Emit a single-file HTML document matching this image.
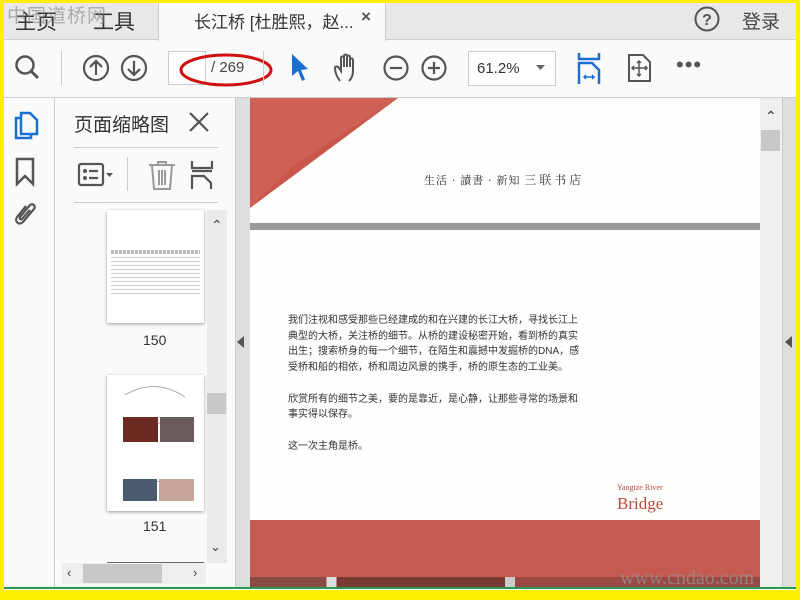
<!DOCTYPE html>
<html><head><meta charset="utf-8"><style>
*{margin:0;padding:0;box-sizing:border-box}
body{width:800px;height:600px;overflow:hidden;background:#ffef00;position:relative;font-family:"Liberation Sans","Noto Sans CJK SC",sans-serif}
.a{position:absolute}
svg{position:absolute;overflow:visible}
</style></head><body>
<div class="a" style="left:4px;top:3px;width:792px;height:587px;background:#fafafa"></div>
<!-- tab bar -->
<div class="a" style="left:4px;top:3px;width:792px;height:37px;background:#e8e8e8;border-bottom:1px solid #ccc"></div>
<div class="a" style="left:158px;top:3px;width:228px;height:38px;background:#fafafa;border-left:1px solid #ccc;border-right:1px solid #ccc"></div>
<div class="a" style="left:15px;top:6px;font-size:21px;color:#333">主页</div>
<div class="a" style="left:93px;top:6px;font-size:21px;color:#333">工具</div>
<div class="a" style="left:7px;top:1px;font-size:19px;color:rgba(120,120,120,.55);letter-spacing:1px">中国道桥网</div>
<div class="a" style="left:194px;top:8px;font-size:17px;color:#333">长江桥 [杜胜熙，赵...</div>
<div class="a" style="left:361px;top:7px;font-size:17px;color:#555;font-weight:bold">×</div>
<svg style="left:694px;top:6px" width="26" height="26"><circle cx="13" cy="13" r="11.5" fill="none" stroke="#555" stroke-width="2"/><text x="13" y="19" font-size="16" text-anchor="middle" fill="#555" font-family="Liberation Sans" font-weight="bold">?</text></svg>
<div class="a" style="left:742px;top:7px;font-size:19px;color:#444">登录</div>
<!-- toolbar -->
<div class="a" style="left:4px;top:97px;width:792px;height:1px;background:#ccc"></div>
<svg style="left:14px;top:54px" width="28" height="28"><circle cx="11" cy="11" r="8.5" fill="none" stroke="#555" stroke-width="2.5"/><line x1="17" y1="17" x2="24" y2="24" stroke="#555" stroke-width="3"/></svg>
<div class="a" style="left:61px;top:51px;width:1px;height:34px;background:#ccc"></div>
<svg style="left:82px;top:54px" width="28" height="28"><circle cx="14" cy="14" r="12" fill="none" stroke="#555" stroke-width="2.2"/><path d="M14 21V7M8 13l6-6 6 6" fill="none" stroke="#555" stroke-width="2.2"/></svg>
<svg style="left:120px;top:54px" width="28" height="28"><circle cx="14" cy="14" r="12" fill="none" stroke="#555" stroke-width="2.2"/><path d="M14 7v14M8 15l6 6 6-6" fill="none" stroke="#555" stroke-width="2.2"/></svg>
<div class="a" style="left:168px;top:51px;width:38px;height:34px;border:1px solid #ccc;background:#fff"></div>
<div class="a" style="left:211px;top:59px;font-size:15px;color:#444">/ 269</div>
<svg style="left:178px;top:50px" width="96" height="40"><ellipse cx="48" cy="20" rx="45" ry="15" fill="none" stroke="#d01010" stroke-width="3"/></svg>
<div class="a" style="left:263px;top:51px;width:1px;height:34px;background:#ccc"></div>
<svg style="left:290px;top:53px" width="20" height="30"><path d="M2 1L2 23L8 18L12 28L15 26.5L11 17L18 16Z" fill="#1a6fd0"/></svg>
<svg style="left:332px;top:53px" width="30" height="30"><path d="M8 28C5 24 3 19 3 15c0-2 3-2 4 0l2 3V5c0-2 3-2 3 0v9V3c0-2 3-2 3 0v11V4c0-2 3-2 3 0v10V7c0-2 3-2 3 0v11c0 5-2 8-4 10" fill="none" stroke="#555" stroke-width="2"/></svg>
<svg style="left:383px;top:55px" width="26" height="26"><circle cx="13" cy="13" r="11.5" fill="none" stroke="#555" stroke-width="2.2"/><line x1="7" y1="13" x2="19" y2="13" stroke="#555" stroke-width="2.2"/></svg>
<svg style="left:421px;top:55px" width="26" height="26"><circle cx="13" cy="13" r="11.5" fill="none" stroke="#555" stroke-width="2.2"/><path d="M7 13h12M13 7v12" stroke="#555" stroke-width="2.2"/></svg>
<div class="a" style="left:468px;top:51px;width:88px;height:35px;border:1px solid #ccc;background:#fff"></div>
<div class="a" style="left:477px;top:60px;font-size:15px;color:#333">61.2%</div>
<svg style="left:536px;top:65px" width="10" height="6"><path d="M0 0h9L4.5 5z" fill="#666"/></svg>
<svg style="left:578px;top:52px" width="24" height="32"><path d="M1 1v6h20V1" fill="none" stroke="#1a6fd0" stroke-width="2.5"/><path d="M1 32V11h13l7 7v14" fill="none" stroke="#1a6fd0" stroke-width="2.5"/><path d="M6 25h10M8 23l-2 2 2 2M14 23l2 2-2 2" fill="none" stroke="#1a6fd0" stroke-width="1.5"/></svg>
<svg style="left:628px;top:54px" width="24" height="28"><path d="M1 1h14l7 7v19H1z" fill="none" stroke="#555" stroke-width="2"/><path d="M11 7v15M4 14h15M9 9l2-2 2 2M9 20l2 2 2-2M6 12l-2 2 2 2M17 12l2 2-2 2" fill="none" stroke="#555" stroke-width="1.5"/></svg>
<div class="a" style="left:676px;top:52px;font-size:22px;color:#555;letter-spacing:1px">•••</div>
<!-- left icon column -->
<div class="a" style="left:54px;top:98px;width:1px;height:490px;background:#ccc"></div>
<svg style="left:15px;top:112px" width="24" height="28"><path d="M6 1h9l7 7v14H6z" fill="none" stroke="#1a6fd0" stroke-width="2.5"/><path d="M6 6H1v20h15v-4" fill="none" stroke="#1a6fd0" stroke-width="2.5"/></svg>
<svg style="left:15px;top:157px" width="20" height="30"><path d="M2 2h16v25l-8-8-8 8z" fill="none" stroke="#555" stroke-width="2.5"/></svg>
<svg style="left:12px;top:200px" width="26" height="30"><path d="M14 6L5 17c-3 4 2 9 6 5l11-13c2-3-1-6-4-4L8 17c-1 2 1 3 2 2l8-9" fill="none" stroke="#555" stroke-width="2.2"/></svg>
<!-- thumbnail panel -->
<div class="a" style="left:74px;top:110px;font-size:19px;color:#333">页面缩略图</div>
<svg style="left:189px;top:112px" width="20" height="20"><path d="M1 1l18 18M19 1L1 19" stroke="#555" stroke-width="2.2"/></svg>
<div class="a" style="left:74px;top:147px;width:144px;height:1px;background:#ccc"></div>
<svg style="left:78px;top:163px" width="36" height="24"><rect x="1" y="1" width="24" height="21" rx="2" fill="none" stroke="#555" stroke-width="2.2"/><circle cx="7" cy="8" r="2" fill="#555"/><circle cx="7" cy="15" r="2" fill="#555"/><path d="M11 8h9M11 15h9" stroke="#555" stroke-width="2.2"/><path d="M28 10h7l-3.5 4z" fill="#555"/></svg>
<div class="a" style="left:127px;top:157px;width:1px;height:34px;background:#ccc"></div>
<svg style="left:148px;top:160px" width="28" height="30"><path d="M1 5h26M10 5V2h8v3M4 5l2 24h16l2-24M11 10v15M14 10v15M17 10v15" fill="none" stroke="#999" stroke-width="2"/></svg>
<svg style="left:191px;top:160px" width="24" height="30"><path d="M1 1v7h20V1M1 11h20" fill="none" stroke="#555" stroke-width="2.2"/><path d="M1 29V16h12l7 7v6" fill="none" stroke="#555" stroke-width="2.2"/></svg>
<div class="a" style="left:74px;top:202px;width:144px;height:1px;background:#ccc"></div>
<div class="a" style="left:207px;top:210px;width:20px;height:353px;background:#eaeaea"></div>
<div class="a" style="left:207px;top:393px;width:19px;height:21px;background:#c8c8c8"></div>
<div class="a" style="left:211px;top:217px;font-size:14px;color:#444">⌃</div>
<div class="a" style="left:210px;top:539px;font-size:13px;color:#444">⌄</div>
<div class="a" style="left:107px;top:210px;width:97px;height:113px;background:#fff;box-shadow:0 1px 3px #999;padding:26px 4px">
<div style="height:4px;background:repeating-linear-gradient(90deg,#bbb 0 3px,#fff 3px 4px);margin:14px 0 3px"></div>
<div style="height:40px;background:repeating-linear-gradient(180deg,#ccc 0 1px,transparent 1px 4px)"></div></div>
<div class="a" style="left:143px;top:332px;font-size:14px;color:#333">150</div>
<div class="a" style="left:107px;top:375px;width:97px;height:136px;background:#fff;box-shadow:0 1px 3px #999"></div>
<svg style="left:107px;top:375px" width="97" height="136"><path d="M18 20q30-18 60 2M20 116q30-18 60-2" fill="none" stroke="#aaa" stroke-width="1"/><path d="M18 57q30-18 60 0" fill="none" stroke="#aaa"/></svg>
<div class="a" style="left:123px;top:417px;width:35px;height:25px;background:#6d2a22"></div>
<div class="a" style="left:160px;top:417px;width:34px;height:25px;background:#6a5c5c"></div>
<div class="a" style="left:123px;top:479px;width:34px;height:22px;background:#4a5a70"></div>
<div class="a" style="left:159px;top:479px;width:35px;height:22px;background:#c7a39a"></div>
<div class="a" style="left:143px;top:518px;font-size:14px;color:#333">151</div>
<div class="a" style="left:107px;top:562px;width:97px;height:2px;background:#666"></div>
<div class="a" style="left:62px;top:563px;width:144px;height:21px;background:#eee"></div>
<div class="a" style="left:83px;top:564px;width:79px;height:19px;background:#c8c8c8"></div>
<div class="a" style="left:67px;top:565px;font-size:13px;color:#444">‹</div>
<div class="a" style="left:193px;top:565px;font-size:13px;color:#444">›</div>
<!-- doc area -->
<div class="a" style="left:235px;top:98px;width:15px;height:490px;background:#dedede;border-left:1px solid #ccc"></div>
<svg style="left:237px;top:336px" width="8" height="12"><path d="M7 0v12L0 6z" fill="#555"/></svg>
<div class="a" style="left:782px;top:98px;width:14px;height:490px;background:#dedede;border-left:1px solid #ccc"></div>
<svg style="left:785px;top:336px" width="8" height="12"><path d="M7 0v12L0 6z" fill="#555"/></svg>
<div class="a" style="left:760px;top:98px;width:22px;height:490px;background:#efefef"></div>
<div class="a" style="left:761px;top:130px;width:19px;height:21px;background:#c8c8c8"></div>
<div class="a" style="left:765px;top:108px;font-size:14px;color:#333">⌃</div>
<!-- page -->
<div class="a" style="left:250px;top:98px;width:510px;height:490px;background:#fefefc"></div>
<svg style="left:250px;top:98px" width="510" height="490"><path d="M0 0H148L0 110z" fill="#c9564a"/><path d="M0 0H148L40 70 0 110z" fill="#d66a5f" opacity=".5"/></svg>
<div class="a" style="left:424px;top:171px;font-size:11px;color:#333;letter-spacing:1px;font-family:'Noto Serif CJK SC',serif">生活 · 讀書 · 新知 <span style="font-size:12px;letter-spacing:3px">三联书店</span></div>
<div class="a" style="left:250px;top:223px;width:510px;height:7px;background:#9a9a9a"></div>
<div class="a" style="left:288px;top:313px;font-size:10px;line-height:15.7px;color:#333;white-space:nowrap">我们注视和感受那些已经建成的和在兴建的长江大桥，寻找长江上<br>典型的大桥，关注桥的细节。从桥的建设秘密开始，看到桥的真实<br>出生；搜索桥身的每一个细节，在陌生和震撼中发掘桥的DNA，感<br>受桥和船的相依，桥和周边风景的携手，桥的原生态的工业美。<br><br>欣赏所有的细节之美，要的是靠近，是心静，让那些寻常的场景和<br>事实得以保存。<br><br>这一次主角是桥。</div>
<div class="a" style="left:617px;top:483px;font-size:8px;color:#b94a40;font-family:'Liberation Serif',serif">Yangtze River</div>
<div class="a" style="left:617px;top:494px;font-size:17px;color:#b94a40;font-family:'Liberation Serif',serif">Bridge</div>
<div class="a" style="left:250px;top:520px;width:510px;height:57px;background:#c45a50"></div>
<div class="a" style="left:250px;top:577px;width:510px;height:11px;background:linear-gradient(90deg,#8a4a44 0 15%,#ddd 15% 17%,#7a3a34 17% 50%,#ccc 50% 52%,#9a4a44 52% 100%)"></div>
<div class="a" style="left:620px;top:567px;font-size:20px;color:rgba(150,150,150,.7);font-family:'Liberation Serif',serif">www.cndao.com</div>
<div class="a" style="left:4px;top:587px;width:792px;height:2px;background:#2a9a50"></div>
</body></html>
